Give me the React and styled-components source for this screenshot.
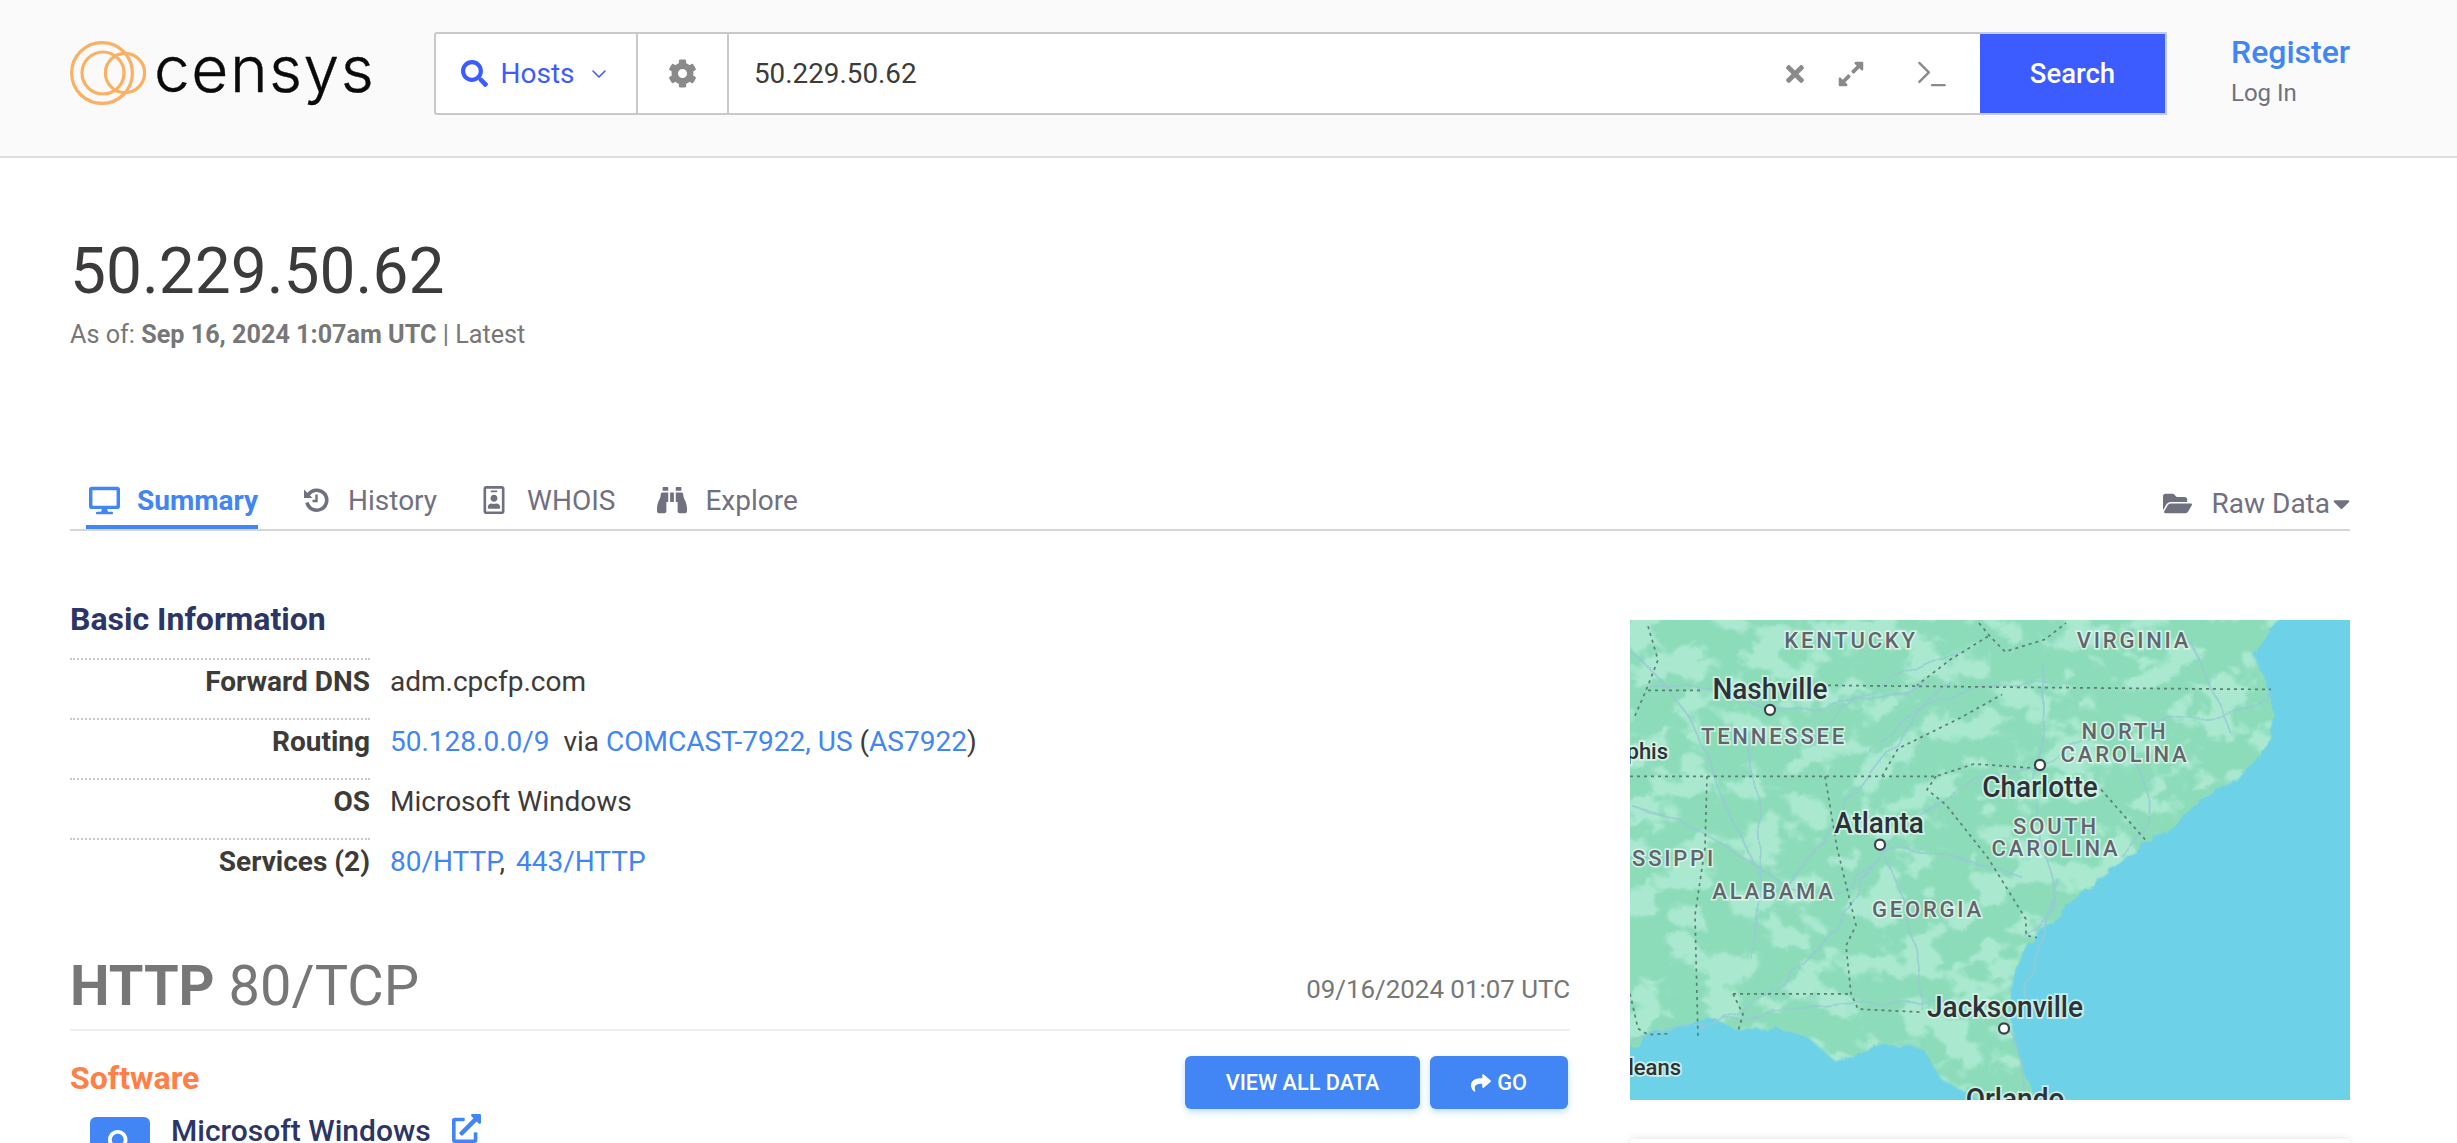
import React from 'react';
import styled, { createGlobalStyle } from 'styled-components';
import { FaSearch, FaCog, FaTimes, FaExpandAlt, FaDesktop, FaRegIdBadge, FaBinoculars, FaFolderOpen, FaCaretDown, FaShare, FaExternalLinkAlt } from 'react-icons/fa';
import { ChevronDown, Terminal } from 'lucide-react';

const Global = createGlobalStyle`
  html, body { margin: 0; padding: 0; height: 100%; overflow: hidden; background: #fff; }
  body { font-family: Roboto, "Liberation Sans", sans-serif; color: #3d3a3a; }
  * { box-sizing: border-box; }
`;

const Page = styled.div`height: 1143px; overflow: hidden;`;
const Header = styled.header`
  height: 158px; background: #fafafa; border-bottom: 2px solid #dcdde0;
  display: flex; align-items: flex-start; padding: 32px 0 0 70px;
`;
const Logo = styled.div`width: 364px; height: 82px; display: flex; align-items: center; gap: 8px;`;
const LogoWord = styled.span`
  font-family: Inter, sans-serif; font-weight: 300; font-size: 64px; line-height: 1; color: #0a0a0a;
  letter-spacing: 1.5px; margin-top: -8px; -webkit-text-stroke: 0.4px #0a0a0a;
`;
const SearchBar = styled.div`
  width: 1733px; height: 83px; display: flex; background: #fff;
  border: 2px solid #c9c9c9; border-radius: 3px;
`;
const Segment = styled.div`
  width: ${p => p.$w}px; flex: none; display: flex; align-items: center; justify-content: center;
  border-right: 2px solid #c9c9c9; gap: 12px; color: ${p => p.$c};
`;
const HostsLabel = styled.span`font-size: 28px;`;
const QueryWrap = styled.div`flex: 1; display: flex; align-items: center; padding-left: 25px;`;
const Query = styled.span`font-size: 27.8px; color: #3d3a3a; flex: 1;`;
const Tool = styled.span`display: flex; color: #8a8a8a; margin-right: ${p => p.$mr}px;`;
const SearchBtn = styled.div`
  width: 187px; flex: none; background: #3d5cff; color: #fff; font-size: 27.5px; font-weight: 500;
  display: flex; align-items: center; justify-content: center; margin: -2px -2px -2px 0; border: 2px solid #c4cbee; border-left: 0;
`;
const User = styled.div`margin-left: 64px; display: flex; flex-direction: column; margin-top: -2px;`;
const Register = styled.span`font-size: 32px; font-weight: 500; color: #4285f4; line-height: 44px;`;
const LogIn = styled.span`font-size: 24px; color: #6f7181; line-height: 38px;`;

const Main = styled.main`padding: 0 107px 0 70px;`;
const Title = styled.h1`font-size: 64px; font-weight: 400; color: #3d3a3a; margin: 78px 0 0; line-height: 72px;`;
const AsOf = styled.div`font-size: 25.2px; color: #777; line-height: 32px; margin-top: 11px; b { font-weight: 700; }`;

const Tabs = styled.nav`
  margin-top: 127px; height: 53px; display: flex; align-items: flex-start; border-bottom: 2px solid #d6d6d6; padding-left: 16px;
`;
const Tab = styled.div`
  display: flex; align-items: center; gap: ${p => p.$gap || 19}px; height: 51px; padding: 0 0 3px 3px; margin-right: ${p => p.$mr || 0}px;
  font-size: 28px; font-weight: ${p => p.$active ? 700 : 400}; color: ${p => p.$active ? '#4285f4' : '#6f7181'};
  border-bottom: 4px solid ${p => p.$active ? '#4285f4' : 'transparent'};
`;
const RawData = styled.div`
  margin-left: auto; display: flex; align-items: center; height: 51px; padding-bottom: 1px; font-size: 28px; color: #6f7181;
`;
const FolderIcon = styled.span`display: flex; margin-right: 20px;`;
const CaretIcon = styled.span`display: flex; margin: 0 -5px 0 -2px;`;
const Columns = styled.div`display: grid; grid-template-columns: 1500px 720px; column-gap: 60px;`;
const Left = styled.div`min-width: 0;`;
const H2 = styled.h2`font-size: 32px; font-weight: 700; color: #2b3566; margin: 68px 0 0; line-height: 40px;`;
const Rows = styled.div`margin-top: 19px;`;
const Row = styled.div`display: flex; height: 60px; font-size: 28px; align-items: center;`;
const Key = styled.div`
  width: 300px; height: 100%; text-align: right; font-weight: 700; border-top: 2px dotted #c8c8c8;
  display: flex; align-items: center; justify-content: flex-end; padding-bottom: 16px; color: #3d3a3a;
`;
const Val = styled.div`margin-left: 20px; padding-bottom: 14px; white-space: pre;`;
const A = styled.span`color: #4285f4; margin-left: ${p => p.$ml || 0}px;`;

const ServiceHead = styled.div`
  margin-top: 57px; display: flex; justify-content: space-between; align-items: center;
  border-bottom: 2px solid #eee; height: 76px; padding-bottom: 12px;
`;
const ServiceTitle = styled.div`font-size: 56px; color: #777; b { font-weight: 700; }`;
const Stamp = styled.div`font-size: 25.9px; color: #777; margin-top: 6px;`;
const SoftwareRow = styled.div`display: flex; justify-content: space-between; align-items: flex-start;`;
const Orange = styled.div`font-size: 32px; font-weight: 700; color: #ff7f47; line-height: 40px; margin-top: 27px;`;
const Buttons = styled.div`display: flex; gap: 10px; margin-top: 25px; margin-right: 2px;`;
const Btn = styled.div`
  height: 53px; width: ${p => p.$w}px; background: #4285f4; color: #fff; border-radius: 6px; font-size: 21.7px; font-weight: 500;
  display: flex; align-items: center; justify-content: center; gap: 6px; box-shadow: 0 3px 6px rgba(66,165,245,.35);
`;
const SoftItem = styled.div`display: flex; align-items: flex-start; padding-left: 20px; margin-top: 8px;`;
const SoftBadge = styled.div`
  width: 60px; height: 50px; background: #4285f4; border-radius: 6px; color: #fff; display: flex; justify-content: center; align-items: center;
`;
const SoftName = styled.div`font-size: 30px; font-weight: 500; color: #2b3566; margin: -3px 21px 0; line-height: 34px;`;
const ExtLink = styled.span`display: flex; color: #4285f4; margin-top: -3px;`;

const Right = styled.aside`padding-top: 89px;`;
const MapBox = styled.div`width: 720px; height: 480px; overflow: hidden;`;
const Card = styled.div`margin-top: 39px; height: 80px; background: #fff; border-radius: 4px; box-shadow: 0 0 8px rgba(0,0,0,.12);`;
const City = styled.text`font: 500 ${p => p.$size || 28}px Roboto, sans-serif; fill: #2c3238; stroke: #dff6ec; stroke-width: 3.5px; paint-order: stroke; stroke-opacity: .8;`;
const StateName = styled.text`font: 500 22px Roboto, sans-serif; letter-spacing: 2.8px; fill: #5f666d; stroke: #e6f7ef; stroke-width: 3px; paint-order: stroke; stroke-opacity: .85;`;

const Dot = ({ x, y }) => <circle cx={x} cy={y} r="5" fill="#fff" stroke="#39424a" strokeWidth="2.2" />;

const LAND = 'M-30 -30 H655 L648 0 L636 20 L622 33 L636 60 L644 90 L641 116 L608 156 L570 176 L542 203 L514 219 L490 236 L462 259 L429 286 L405 309 L391 329 L382 356 L379 383 L386 423 L405 470 V500 H355 L349 470 L311 449 L292 419 L250 415 L207 433 L179 409 L146 399 L108 403 L84 389 L51 397 L18 406 L4 419 L0 416 H-30 Z';
const roads = [
  'M0 30 Q60 80 80 140 T130 250', 'M0 180 Q70 200 140 250 T250 225', 'M250 225 Q320 225 390 250', 'M250 225 Q215 300 170 340 T70 400',
  'M250 225 Q290 290 290 380', 'M320 60 Q260 120 205 200 T145 260', 'M405 145 Q420 90 410 40', 'M405 145 Q340 150 300 185 T250 225',
  'M405 145 Q470 100 560 95 T640 70', 'M405 145 Q400 190 420 240 T395 310', 'M240 130 Q300 60 420 60', 'M0 410 Q100 385 240 375 T375 395',
  'M375 395 Q400 440 390 470', 'M20 65 Q90 60 140 88', 'M140 88 Q210 90 300 60', 'M430 255 Q410 330 385 390', 'M120 120 Q130 190 130 250 T120 330',
  'M190 110 Q240 60 330 30', 'M500 130 Q540 190 490 230', 'M560 20 Q580 60 600 110',
];
const borders = [
  'M18 69 H70', 'M198 64 L400 66 L641 68', 'M0 153 H306 L344 141 L405 145', 'M252 153 L268 126 L330 96 L372 73',
  'M306 153 L297 166 L316 181 L358 233 L396 293 L396 309 L407 311', 'M471 166 L516 216', 'M195 153 L207 223 L226 299 L216 319 L221 366 L228 381 L292 384',
  'M103 366 H221', 'M103 366 L113 386 L108 403', 'M77 153 L75 223 L65 289 L68 409', 'M349 3 L360 16 L375 31 L415 19 L436 3', 'M358 16 L320 39 L287 64',
  'M18 6 L28 39 L16 69 L4 96', 'M0 366 L8 400 L18 406 L40 405',
];

const MapArt = () => (
  <svg width="720" height="480" viewBox="0 0 720 480" role="img" aria-label="Map">
    <defs>
      <filter id="patches" x="0" y="0" width="100%" height="100%" colorInterpolationFilters="sRGB">
        <feTurbulence type="fractalNoise" baseFrequency="0.026 0.034" numOctaves="5" seed="11" result="n" />
        <feColorMatrix in="n" type="matrix" values="0 0 0 0 1  0 0 0 0 1  0 0 0 0 1  10 0 0 0 -5" result="t" />
        <feComposite in="SourceGraphic" in2="t" operator="in" />
        <feGaussianBlur stdDeviation="0.9" />
      </filter>
      <filter id="wiggle" x="0" y="0" width="100%" height="100%">
        <feTurbulence type="fractalNoise" baseFrequency="0.03" numOctaves="2" seed="3" result="n" />
        <feDisplacementMap in="SourceGraphic" in2="n" scale="14" />
        <feGaussianBlur stdDeviation="0.5" />
      </filter>
      <filter id="coast">
        <feTurbulence type="fractalNoise" baseFrequency="0.06" numOctaves="3" seed="5" result="n" />
        <feDisplacementMap in="SourceGraphic" in2="n" scale="9" />
        <feGaussianBlur stdDeviation="0.6" />
      </filter>
    </defs>
    <rect width="720" height="480" fill="#6dd2e8" />
    <g transform="scale(1 1.0213)">
      <g filter="url(#coast)">
        <path fill="#8cdcba" d={LAND} />
        <path fill="#aae9d0" d={LAND} filter="url(#patches)" />
      </g>
      <g fill="none" stroke="#97c9d4" strokeWidth="2" opacity=".75" filter="url(#wiggle)">{roads.map((d, i) => <path key={i} d={d} />)}</g>
      <g fill="none" stroke="#5c7f74" strokeWidth="1.7" strokeDasharray="3 4">{borders.map((d, i) => <path key={i} d={d} />)}</g>
      <Dot x={140} y={88} /><Dot x={410} y={142} /><Dot x={250} y={220} /><Dot x={374} y={400} />
      <g textAnchor="middle">
        <StateName x="221" y="27">KENTUCKY</StateName>
        <StateName x="504" y="27">VIRGINIA</StateName>
        <StateName x="144" y="121">TENNESSEE</StateName>
        <StateName x="495" y="117">NORTH</StateName>
        <StateName x="495" y="139">CAROLINA</StateName>
        <StateName x="426" y="210">SOUTH</StateName>
        <StateName x="426" y="231">CAROLINA</StateName>
        <StateName x="144" y="273">ALABAMA</StateName>
        <StateName x="298" y="291">GEORGIA</StateName>
        <City x="140" y="77">Nashville</City>
        <City x="410" y="173">Charlotte</City>
        <City x="249" y="209">Atlanta</City>
        <City x="375" y="389">Jacksonville</City>
        <City x="385" y="479">Orlando</City>
      </g>
      <g textAnchor="end">
        <City x="38" y="136" $size={22}>phis</City>
        <City x="51" y="446" $size={22}>leans</City>
        <StateName x="86" y="241">SSIPPI</StateName>
      </g>
    </g>
  </svg>
);

const HistoryIcon = () => (
  <svg width="26" height="26" viewBox="0 0 26 26" fill="none" stroke="currentColor" aria-hidden="true">
    <path d="M5.2 8 A10 10 0 1 1 4 15.5" strokeWidth="3.6" />
    <path d="M1 2.5 L1 11 L9.5 11 Z" fill="currentColor" stroke="none" />
    <path d="M13.5 7.5 V14 H9.5" strokeWidth="2.4" />
  </svg>
);

export default function App() {
  return (
    <Page>
      <Global />
      <Header>
        <Logo>
          <svg width="76" height="66" viewBox="0 0 76 66" fill="none" stroke="#fbb063" strokeWidth="3.2" aria-label="Censys logo">
            <circle cx="32" cy="33" r="30.4" />
            <circle cx="33" cy="33" r="21" />
            <circle cx="55" cy="33" r="19.6" />
          </svg>
          <LogoWord>censys</LogoWord>
        </Logo>
        <SearchBar>
          <Segment $w={202} $c="#3d5cff"><FaSearch size={27} /><HostsLabel>Hosts</HostsLabel><ChevronDown size={24} strokeWidth={1.6} /></Segment>
          <Segment $w={91} $c="#8a8a8a"><FaCog size={29} /></Segment>
          <QueryWrap>
            <Query>50.229.50.62</Query>
            <Tool $mr={29}><FaTimes size={26} /></Tool>
            <Tool $mr={48}><FaExpandAlt size={28} /></Tool>
            <Tool $mr={29}><Terminal size={38} strokeWidth={1.5} /></Tool>
          </QueryWrap>
          <SearchBtn>Search</SearchBtn>
        </SearchBar>
        <User>
          <Register>Register</Register>
          <LogIn>Log In</LogIn>
        </User>
      </Header>
      <Main>
        <Title>50.229.50.62</Title>
        <AsOf>As of: <b>Sep 16, 2024 1:07am UTC</b> | Latest</AsOf>
        <Tabs>
          <Tab $active $mr={42} $gap={17}><FaDesktop size={31} />Summary</Tab>
          <Tab $mr={40}><HistoryIcon />History</Tab>
          <Tab $mr={39}><FaRegIdBadge size={28} />WHOIS</Tab>
          <Tab $gap={18}><FaBinoculars size={30} />Explore</Tab>
          <RawData>
            <FolderIcon><FaFolderOpen size={29} /></FolderIcon>
            Raw Data
            <CaretIcon><FaCaretDown size={27} /></CaretIcon>
          </RawData>
        </Tabs>
        <Columns>
          <Left>
            <H2>Basic Information</H2>
            <Rows>
              <Row><Key>Forward DNS</Key><Val>adm.cpcfp.com</Val></Row>
              <Row><Key>Routing</Key><Val><A>50.128.0.0/9</A>  via <A>COMCAST-7922, US</A> (<A>AS7922</A>)</Val></Row>
              <Row><Key>OS</Key><Val>Microsoft Windows</Val></Row>
              <Row><Key>Services (2)</Key><Val><A>80/HTTP</A>, <A $ml={4}>443/HTTP</A></Val></Row>
            </Rows>
            <ServiceHead>
              <ServiceTitle><b>HTTP</b> 80/TCP</ServiceTitle>
              <Stamp>09/16/2024 01:07 UTC</Stamp>
            </ServiceHead>
            <SoftwareRow>
              <Orange>Software</Orange>
              <Buttons>
                <Btn $w={235}>VIEW ALL DATA</Btn>
                <Btn $w={138}><FaShare size={20} />GO</Btn>
              </Buttons>
            </SoftwareRow>
            <SoftItem>
              <SoftBadge><FaSearch size={24} /></SoftBadge>
              <SoftName>Microsoft Windows</SoftName>
              <ExtLink><FaExternalLinkAlt size={29} /></ExtLink>
            </SoftItem>
          </Left>
          <Right>
            <MapBox><MapArt /></MapBox>
            <Card />
          </Right>
        </Columns>
      </Main>
    </Page>
  );
}
